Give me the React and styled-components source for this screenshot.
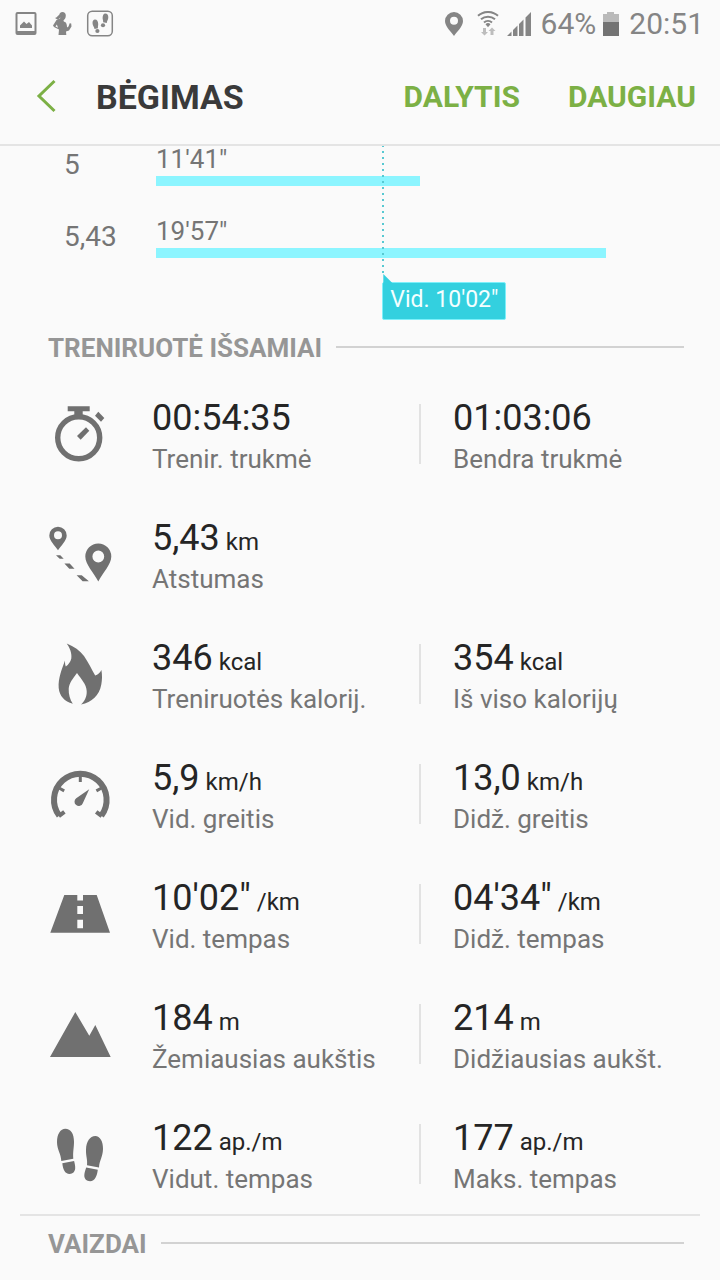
import React from "react";
import styled, { createGlobalStyle } from "styled-components";

const GlobalStyle = createGlobalStyle`
  *, *::before, *::after {
    box-sizing: border-box;
  }
  body {
    margin: 0;
    background: #fafafa;
    color: #252525;
    font-family: Roboto, "Noto Sans", sans-serif;
  }
`;

const Page = styled.div`
  display: flex;
  flex-direction: column;
  min-width: 0;
`;

const StatusBar = styled.div`
  display: flex;
  align-items: center;
  justify-content: space-between;
  height: 48px;
  padding: 0 16px 0 14px;
  color: #858585;
`;

const StatusGroup = styled.div`
  display: flex;
  align-items: center;
  gap: ${({ $gap }) => $gap}px;

  svg {
    display: block;
  }
`;

const StatusText = styled.span`
  font-size: 30px;
  line-height: 36px;
`;

const AppBar = styled.header`
  display: flex;
  align-items: center;
  height: 98px;
  padding: 2px 24px 0 32px;
  border-bottom: 2px solid #e4e4e4;
`;

const BackButton = styled.button`
  display: flex;
  padding: 0;
  border: 0;
  background: none;
  color: #7cb045;
`;

const Title = styled.h1`
  flex: 1;
  margin: 0 0 0 32px;
  font-size: 34px;
  line-height: 40px;
  font-weight: 700;
  color: #3a3a3a;
`;

const Actions = styled.div`
  display: flex;
  gap: 48px;
`;

const ActionButton = styled.button`
  padding: 0;
  border: 0;
  background: none;
  font-family: inherit;
  font-size: 30px;
  line-height: 36px;
  font-weight: 700;
  color: #7cb045;
`;

const Chart = styled.section`
  position: relative;
  padding: 0 114px 30px 64px;
`;

const ChartRow = styled.div`
  display: grid;
  grid-template-columns: 92px 1fr;
  height: 72px;
`;

const Distance = styled.div`
  font-size: 28px;
  line-height: 38px;
  color: #757575;
`;

const Pace = styled.div`
  height: 30px;
  font-size: 26px;
  line-height: 26px;
  color: #757575;
`;

const Bar = styled.div`
  height: 10px;
  background: #8cf5ff;
`;

const AverageLayer = styled.div`
  position: absolute;
  top: 0;
  bottom: 0;
  left: 156px;
  right: 114px;
`;

const Average = styled.div`
  position: absolute;
  top: 0;
  bottom: 0;
`;

const AverageLine = styled.div`
  width: 2px;
  height: 127px;
  background: repeating-linear-gradient(#58c9d2 0 2px, transparent 2px 6px) 0 -1px;
  background-size: 2px 132px;
`;

const AverageTag = styled.div`
  position: absolute;
  left: 0;
  bottom: 0;
  height: 38px;
  padding: 0 7px;
  border: 1px solid #7df0fa;
  border-radius: 2px;
  background: #33d0df;
  color: #f4ffff;
  font-size: 23px;
  line-height: 34px;
  white-space: nowrap;

  &::before {
    content: "";
    position: absolute;
    left: 0;
    top: -9px;
    width: 10px;
    height: 10px;
    background: #33d0df;
    clip-path: polygon(0 0, 100% 100%, 0 100%);
  }
`;

const SectionHeading = styled.div`
  display: flex;
  align-items: center;
  gap: 14px;
  height: 54px;
  padding: 0 36px 0 48px;

  &::after {
    content: "";
    flex: 1;
    height: 2px;
    background: #d2d2d2;
  }
`;

const HeadingText = styled.h2`
  margin: 0;
  padding-top: 2px;
  font-size: 26px;
  line-height: 32px;
  font-weight: 700;
  color: #969696;
`;

const StatRow = styled.div`
  display: grid;
  grid-template-columns: 104px 1fr 1fr;
  align-items: center;
  height: 120px;
  padding: 0 34px 0 48px;
`;

const StatIcon = styled.svg`
  display: block;
  width: 64px;
  height: 64px;
  color: #707070;
`;

const Stat = styled.div`
  display: flex;
  align-items: center;
  white-space: nowrap;
`;

const StatText = styled.div`
  padding-top: 6px;
`;

const Separator = styled.div`
  width: 2px;
  height: 60px;
  margin-right: 32px;
  background: #e2e2e2;
`;

const Value = styled.div`
  height: 44px;
  font-size: 36px;
  line-height: 44px;
  color: #252525;
`;

const Unit = styled.span`
  margin-left: 6px;
  font-size: 24px;
  line-height: 24px;
`;

const Label = styled.div`
  font-size: 26px;
  line-height: 38px;
  color: #757575;
`;

const Divider = styled.hr`
  width: auto;
  height: 2px;
  margin: 0 20px;
  border: 0;
  background: #e4e4e4;
`;

const icons = {
  stopwatch: (
    <>
      <circle cx="30.7" cy="35.7" r="21" fill="none" stroke="currentColor" strokeWidth="5.4" />
      <path d="M19.7 4.3h22v5h-7v4h-8.4v-4h-6.6z" />
      <path d="M50.3 9.7l6 6.3-3.3 3.7-6-6z" />
      <path d="M38 25.3l3.3 3.4-8.6 9-3.7-3.7z" />
    </>
  ),
  route: (
    <>
      <path
        fillRule="evenodd"
        d="M10 4.7a8.7 8.7 0 0 0-8.7 8.7C1.3 18.5 7 23.5 10 28.3c3-4.8 8.7-9.8 8.7-14.9A8.7 8.7 0 0 0 10 4.700zM10 9.300a4 4 0 1 1 0 8 4 4 0 0 1 0-8z"
      />
      <path
        fillRule="evenodd"
        d="M50.3 21.5a13 13 0 0 0-13 13c0 8 8.5 16 13 25 4.500-9 13-17 13-25a13 13 0 0 0-13-13zM50.300 28.600a5.900 5.900 0 1 1 0 11.800 5.900 5.900 0 0 1 0-11.800z"
      />
      <path d="M8 33.200h4.300l3.400 3.500h-4zM16.400 41.500h5.300l4.800 5.200h-5.200zM28.600 53.200h5.100l7.200 6h-6.300z" />
    </>
  ),
  flame: (
    <path d="M18.700 1.500C26 4.500 32 8.500 36 14C40.500 20.500 43.500 27 47.200 33.500C49.800 32.500 52 31 53.400 28C54.300 33 54.200 38 53.300 42.500C51.300 53.500 44 60.300 33 62.500C36.800 59 39 54.500 38.700 49C38.400 42 33 37 29 31C25 36.500 21 41 20.700 47C20.500 52.500 22 57.500 24.800 61.800C16.500 59.500 11.500 54 10.700 46C10 36 14 27 17 18.500C17 20.500 17 22.500 17.800 24.500C20.500 22.500 22.500 20 23.300 16.500C24 11.500 22 6 18.700 1.500z" />
  ),
  gauge: (
    <>
      <g fill="none" stroke="currentColor">
        <path strokeWidth="6" d="M11.300 53.800a26.300 26.300 0 1 1 42 0" />
        <path strokeWidth="4" d="M10.800 54.200l5.600-4.300M53.800 54.200l-5.600-4.300" />
        <path strokeWidth="3" d="M32.300 13v7M11.500 26.200l4.700 2.700M53.100 26.200l-4.700 2.700" />
      </g>
      <path d="M41.200 27.200L34.800 41.200a4.300 4.300 0 1 1-6.600-5z" />
    </>
  ),
  road: (
    <path
      fillRule="evenodd"
      d="M16.300 13h13v5.500h5.700V13h13.700L62 50.700H2.300zM29.300 24h5.700v8h-5.700zM29.300 37.700h5.700v8.600h-5.700z"
    />
  ),
  mountains: <path d="M27.300 10l14 23.700 6-10.700 15.400 32H2z" />,
  steps: (
    <>
      <path d="M17.300 6.700c5.500 0 8.700 5 8.700 13 0 6-1.300 10-.7 17l-12 2.200C13 32 9 27.500 9 20c0-8 3.500-13.300 8.300-13.300z" />
      <path d="M14.300 41.300l11.800-2.200c.7 2.700 1.200 4.700 1.100 7.200-.2 3.500-2.500 5.700-5.500 5.700-5 0-6.700-4.700-7.400-10.700z" />
      <path d="M47.300 14c4.700 0 7.900 5.500 7.700 13-.2 8-3.700 11.500-4 18.600l-12-2.300c.7-6-1.200-9-1-15.800.2-8 4-13.500 9.300-13.500z" />
      <path d="M38.200 45.400l11.600 2.400c-.8 6.200-2.800 11.500-7.700 11.500-3.500 0-5.800-2.300-5.800-5.700 0-2.800.9-5.200 1.900-8.200z" />
    </>
  ),
};

const splits = [
  { distance: "5", pace: "11'41\"", seconds: 701 },
  { distance: "5,43", pace: "19'57\"", seconds: 1197 },
];
const averageSeconds = 602;
const slowest = Math.max(...splits.map((s) => s.seconds));
const percent = (seconds) => `${(seconds / slowest) * 100}%`;

const stats = [
  {
    icon: "stopwatch",
    items: [
      { value: "00:54:35", label: "Trenir. trukmė" },
      { value: "01:03:06", label: "Bendra trukmė" },
    ],
  },
  { icon: "route", items: [{ value: "5,43", unit: "km", label: "Atstumas" }] },
  {
    icon: "flame",
    items: [
      { value: "346", unit: "kcal", label: "Treniruotės kalorij." },
      { value: "354", unit: "kcal", label: "Iš viso kalorijų" },
    ],
  },
  {
    icon: "gauge",
    items: [
      { value: "5,9", unit: "km/h", label: "Vid. greitis" },
      { value: "13,0", unit: "km/h", label: "Didž. greitis" },
    ],
  },
  {
    icon: "road",
    items: [
      { value: "10'02\"", unit: "/km", label: "Vid. tempas" },
      { value: "04'34\"", unit: "/km", label: "Didž. tempas" },
    ],
  },
  {
    icon: "mountains",
    items: [
      { value: "184", unit: "m", label: "Žemiausias aukštis" },
      { value: "214", unit: "m", label: "Didžiausias aukšt." },
    ],
  },
  {
    icon: "steps",
    items: [
      { value: "122", unit: "ap./m", label: "Vidut. tempas" },
      { value: "177", unit: "ap./m", label: "Maks. tempas" },
    ],
  },
];

const PhoneStatus = () => (
  <StatusBar>
    <StatusGroup $gap={14}>
      <svg width="24" height="26" viewBox="0 0 24 26" fill="currentColor">
        <path
          fillRule="evenodd"
          d="M3.500 1h17a2 2 0 0 1 2 2v19a2 2 0 0 1-2 2h-17a2 2 0 0 1-2-2V3a2 2 0 0 1 2-2zM3.500 3v17h17V3z"
        />
        <path d="M6 17v-2.500l4-4 2.500 2.500 2.500-2 3 3.500V17z" />
      </svg>
      <svg width="20" height="26" viewBox="0 0 20 26" fill="currentColor">
        <path d="M10.500 1c2 0 3.300 1.500 3.300 3.500 0 2.300-1 4.200-2.300 4.700l.3 1.300 2 1c1 1.500 1.300 3.500 1.200 5l1.500-1 1.200-3.200 1.500.2.300 3-2.500 4-3 1 .3 3.500H6.500l.5-5.500-5-2.500-1-1.500 3.500-5.500 3.500-1.500.5-1c-1.200.8-2 2-3.500 1.800l-2-1.300c2-.5 3-2.500 4.200-3C7.300 2.500 8.500 1 10.500 1z" />
        <path d="M4.800 13.500l-1.300 2 2.500 1.300z" fill="#fafafa" />
      </svg>
      <svg width="28" height="28" viewBox="0 0 28 28" fill="currentColor">
        <rect x="1.700" y="1.200" width="24.600" height="24.600" rx="4.500" fill="none" stroke="currentColor" strokeWidth="1.500" />
        <path d="M9 9.500c2 0 3.200 2 3.200 4.500 0 2-.5 2.800-.2 4.300l-3.500.7C8.300 17 6.500 15.500 6.500 13c0-2 1-3.500 2.500-3.500z" />
        <ellipse cx="11.400" cy="21" rx="2.100" ry="2" />
        <path d="M19.300 3.500c2 0 3 1.500 3 3.800 0 2.700-1.500 3.700-1.500 5.700l-3.700-.8c.3-1.500-.5-2.700-.5-4.200 0-2.500 1-4.500 2.700-4.500z" />
        <ellipse cx="17" cy="15.300" rx="2.100" ry="2" />
      </svg>
    </StatusGroup>
    <StatusGroup $gap={6}>
      <svg width="26" height="26" viewBox="0 0 26 26" fill="currentColor">
        <path
          fillRule="evenodd"
          d="M12 1a9 9 0 0 0-9 9c0 5.500 6 10.500 9 15 3-4.500 9-9.500 9-15a9 9 0 0 0-9-9zM12 5.800a4 4 0 1 1 0 8 4 4 0 0 1 0-8z"
        />
      </svg>
      <svg width="26" height="26" viewBox="0 0 26 26" fill="none" stroke="currentColor" strokeWidth="2">
        <path d="M4 4.800a15 15 0 0 1 20 0M7 8.300a10.500 10.500 0 0 1 14 0M10 11.500a6 6 0 0 1 8 0" />
        <path d="M11.500 13.200a3.800 3.800 0 0 1 5 0L14 16.300z" fill="currentColor" stroke="none" />
        <path d="M9 17h3v4h2l-3.500 3.500L7 21h2zM16.500 24v-4h-2l3.500-3.500 3.500 3.500h-2v4z" fill="#bdbdbd" stroke="none" />
      </svg>
      <StatusGroup $gap={9}>
        <svg width="26" height="26" viewBox="0 0 26 26" fill="currentColor">
          <path d="M1 25l4.500-4.500V25zM7 19l4.500-4.500V25H7zM13 13l4.500-4.500V25H13zM19.500 6.500L25 1v24h-5.500z" />
        </svg>
        <StatusGroup $gap={6}>
          <StatusText>64%</StatusText>
          <svg width="18" height="26" viewBox="0 0 18 26">
            <path d="M1 3h4V1h7v2h5v9H1z" fill="#bababa" />
            <path d="M1 11h16v14H1z" fill="#737373" />
          </svg>
        </StatusGroup>
        <StatusText>20:51</StatusText>
      </StatusGroup>
    </StatusGroup>
  </StatusBar>
);

const SplitChart = () => (
  <Chart>
    {splits.map((split) => (
      <ChartRow key={split.distance}>
        <Distance>{split.distance}</Distance>
        <div>
          <Pace>{split.pace}</Pace>
          <Bar style={{ width: percent(split.seconds) }} />
        </div>
      </ChartRow>
    ))}
    <AverageLayer>
      <Average style={{ left: percent(averageSeconds) }}>
        <AverageLine />
        <AverageTag>Vid. 10'02"</AverageTag>
      </Average>
    </AverageLayer>
  </Chart>
);

const App = () => {
  return (
    <Page>
      <GlobalStyle />
      <PhoneStatus />
      <AppBar>
        <BackButton aria-label="Atgal">
          <svg width="32" height="36" viewBox="0 0 32 36" fill="none" stroke="currentColor" strokeWidth="3">
            <path d="M22.500 2L7 17l15.500 15" />
          </svg>
        </BackButton>
        <Title>BĖGIMAS</Title>
        <Actions>
          <ActionButton>DALYTIS</ActionButton>
          <ActionButton>DAUGIAU</ActionButton>
        </Actions>
      </AppBar>

      <SplitChart />

      <SectionHeading>
        <HeadingText>TRENIRUOTĖ IŠSAMIAI</HeadingText>
      </SectionHeading>
      {stats.map((row) => (
        <StatRow key={row.icon}>
          <StatIcon viewBox="0 0 64 64" fill="currentColor">
            {icons[row.icon]}
          </StatIcon>
          {row.items.map((item, index) => (
            <Stat key={item.label}>
              {index > 0 && <Separator />}
              <StatText>
                <Value>
                  {item.value}
                  {item.unit && <Unit>{item.unit}</Unit>}
                </Value>
                <Label>{item.label}</Label>
              </StatText>
            </Stat>
          ))}
        </StatRow>
      ))}
      <Divider />
      <SectionHeading>
        <HeadingText>VAIZDAI</HeadingText>
      </SectionHeading>
    </Page>
  );
};

export default App;
